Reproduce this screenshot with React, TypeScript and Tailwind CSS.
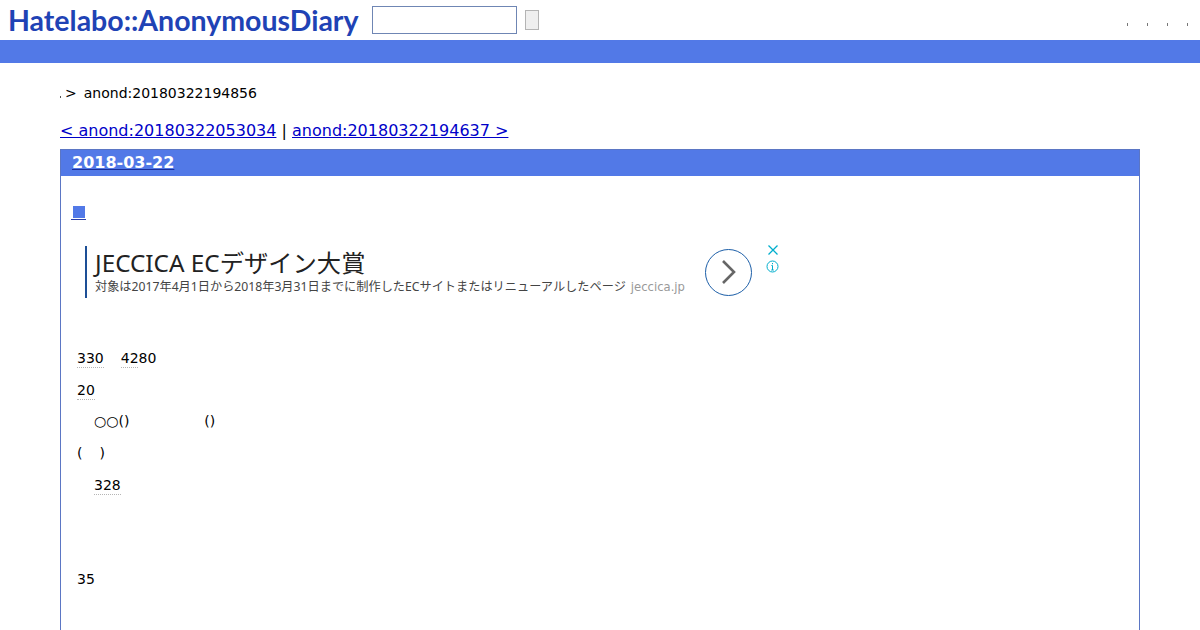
import React from 'react';

const Mark: React.FC<{ children: React.ReactNode; className?: string }> = ({ children, className }) => (
  <span className={`inline-block h-[19px] border-b border-dotted border-[#b5b5b5] leading-[18px] ${className ?? ''}`}>{children}</span>
);

const Row: React.FC<{ children?: React.ReactNode }> = ({ children }) => (
  <div className="flex h-[31.67px] items-start whitespace-pre pl-[16px] leading-[18px]">{children}</div>
);

const App: React.FC = () => {
  return (
    <div className="h-[630px] w-[1200px] overflow-hidden bg-white font-['DejaVu_Sans','Noto_Sans_CJK_JP',sans-serif] text-[14px] text-black">
      <header className="flex h-[40px] items-center">
        <a className="ml-[8px] w-[352px] whitespace-nowrap font-['Lato',sans-serif] text-[28.5px] font-bold leading-none text-[#1f43b5]">
          Hatelabo::AnonymousDiary
        </a>
        <input
          type="text"
          aria-label="search"
          className="ml-[12px] h-[28px] w-[145px] border border-[#6f86b4] bg-white"
        />
        <button type="button" aria-label="submit" className="ml-[8px] h-[20px] w-[14px] border border-[#b4b4b4] bg-[#efefef]" />
        <div className="ml-auto mr-[12px] mt-[8px] flex gap-[19px]">
          {[0, 1, 2, 3].map((i) => (
            <span key={i} className="h-[3px] w-[1px] bg-[#777777]" />
          ))}
        </div>
      </header>
      <div className="h-[23px] bg-[#5279e7]" />

      <main className="px-[60px]">
        <div className="mt-[20px] flex h-[20px] items-center leading-[20px]">
          <span className="mt-[8px] h-[2px] w-[1px] bg-[#555555]" />
          <span className="ml-[4px]">&gt;</span>
          <span className="ml-[7px]">anond:20180322194856</span>
        </div>

        <div className="mt-[18px] h-[19px] text-[16px] leading-[19px]">
          <a className="text-[#0000c8] underline">&lt; anond:20180322053034</a>
          <span> | </span>
          <a className="text-[#0000c8] underline">anond:20180322194637 &gt;</a>
        </div>

        <section className="mt-[8.5px] h-[600px] border border-[#5b76c4]">
          <h2 className="flex h-[26px] items-center bg-[#5279e7] pl-[11px] text-[16px] font-bold text-white">
            <a className="underline decoration-[#1a2f9c]">2018-03-22</a>
          </h2>

          <div className="mt-[27px] flex h-[18px] pl-[10px]">
            <a className="flex h-[17px] w-[15px] items-start justify-center border-b border-[#2b3fa8] pt-[3px]">
              <span className="h-[12px] w-[12px] bg-[#5279e7]" />
            </a>
          </div>

          <div className="ml-[24px] mt-[25px] flex h-[64px] items-start">
            <div className="flex h-[52px] w-[602px] flex-col border-l-2 border-[#1d4f96] pl-[8px]">
              <div className="mt-[3px] h-[28px] whitespace-nowrap font-['Noto_Sans','Noto_Sans_CJK_JP',sans-serif] text-[24.3px] leading-[28px] text-[#222222]">
                JECCICA ECデザイン大賞
              </div>
              <div className="mt-[2px] whitespace-nowrap font-['Noto_Sans','Noto_Sans_CJK_JP',sans-serif] text-[12.2px] leading-[16px] text-[#444444]">
                対象は2017年4月1日から2018年3月31日までに制作したECサイトまたはリニューアルしたページ
                <span className="ml-[5px] font-['DejaVu_Sans',sans-serif] text-[11.6px] text-[#999999]">jeccica.jp</span>
              </div>
            </div>
            <div className="ml-[18px] mt-[3px] flex h-[47px] w-[47px] items-center justify-center rounded-full border border-[#1d5fa8]">
              <svg width="20" height="26" viewBox="0 0 20 26" fill="none" stroke="#666666" strokeWidth="2.6">
                <path d="M4 2 L15 13 L4 24" />
              </svg>
            </div>
            <div className="ml-[14px] -mt-[2px] flex flex-col items-center">
              <svg width="12" height="12" viewBox="0 0 12 12" fill="none" stroke="#00aecd" strokeWidth="1.3">
                <path d="M1.5 1.5 L10.5 10.5 M10.5 1.5 L1.5 10.5" />
              </svg>
              <svg className="mt-[4px]" width="13" height="13" viewBox="0 0 13 13" fill="none" stroke="#00aecd" strokeWidth="1">
                <circle cx="6.5" cy="6.5" r="5.5" />
                <path d="M6.5 5.5 V10 M5.2 10 H7.8 M5.4 5.5 H6.5" />
                <path d="M6.5 3 V4.2" />
              </svg>
            </div>
          </div>

          <div className="mt-[39.4px]">
            <Row>
              <Mark>330</Mark>
              <Mark className="ml-[17px] w-[17px]">4280</Mark>
            </Row>
            <Row>
              <Mark>20</Mark>
            </Row>
            <Row>
              <span className="ml-[17px]">○○()</span>
              <span className="ml-[75px]">()</span>
            </Row>
            <Row>
              <span>(</span>
              <span className="ml-[17px]">)</span>
            </Row>
            <Row>
              <Mark className="ml-[17px]">328</Mark>
            </Row>
            <Row />
            <Row />
            <Row>35</Row>
          </div>
        </section>
      </main>
    </div>
  );
};

export default App;
